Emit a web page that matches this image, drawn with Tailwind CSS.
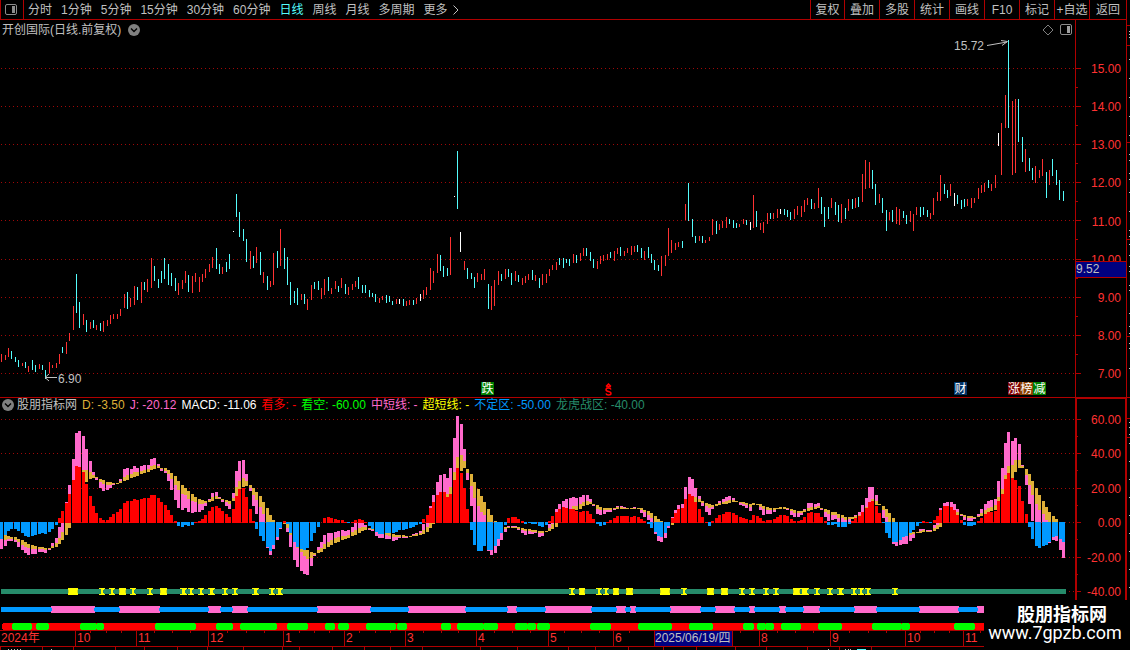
<!DOCTYPE html>
<html lang="zh-CN">
<head>
<meta charset="utf-8">
<title>开创国际 日线</title>
<script src="https://cdn.jsdelivr.net/npm/@tailwindcss/browser@4"></script>
</head>
<body class="bg-black">
<div class="relative flex h-screen overflow-hidden bg-black font-['Liberation_Sans','Noto_Sans_CJK_SC',sans-serif] text-xs text-[#c0c0c0]">
  <main class="flex min-w-0 flex-1 flex-col">

    <header class="flex h-5 shrink-0 items-stretch border-r border-b border-[#b00000] leading-[18px]">
      <button aria-label="侧栏" class="flex w-6 items-center justify-center border-x border-[#b00000] pr-0.5">
        <svg class="h-3 w-3" viewBox="0 0 12 12" fill="none" stroke="#8c8c8c"><rect x=".5" y=".5" width="11" height="10" rx="1.5"/><rect x="7" y="2" width="3" height="7" fill="#8c8c8c" stroke="none"/></svg>
      </button>
      <nav class="flex flex-1 gap-[9px] pl-1 whitespace-nowrap">
        <button>分时</button><button>1分钟</button><button>5分钟</button><button>15分钟</button><button>30分钟</button><button>60分钟</button><button class="text-[#54fcfc]">日线</button><button>周线</button><button>月线</button><button>多周期</button>
        <button class="flex items-center">更多<svg class="ml-1 h-3 w-2" viewBox="0 0 8 12" fill="none" stroke="#c0c0c0"><path d="M1.5 1.5L6 6L1.5 10.5"/></svg></button>
      </nav>
      <div class="flex whitespace-nowrap">
        <button class="w-[34px] border-l border-[#b00000]">复权</button>
        <button class="w-[35px] border-l border-[#b00000]">叠加</button>
        <button class="w-[35px] border-l border-[#b00000]">多股</button>
        <button class="w-[35px] border-l border-[#b00000]">统计</button>
        <button class="w-[35px] border-l border-[#b00000]">画线</button>
        <button class="w-[35px] border-l border-[#b00000]">F10</button>
        <button class="w-[35px] border-l border-[#b00000]">标记</button>
        <button class="w-[35px] border-l border-[#b00000]">+自选</button>
        <button class="w-[37px] border-l border-[#b00000]">返回</button>
      </div>
    </header>

    <section class="flex min-h-0 grow-[377] basis-0 border-r border-[#b00000]">
      <div class="relative min-w-0 flex-1">
        <svg id="price" class="absolute inset-0 size-full" viewBox="0 20 1075 377" preserveAspectRatio="none" shape-rendering="crispEdges"></svg>
        <div class="relative flex items-center justify-between pt-px pr-[3px] pl-0.5">
          <div class="flex items-center gap-[7px] leading-[18px]">
            <h1>开创国际(日线.前复权)</h1>
            <button aria-label="展开"><svg class="h-3 w-3" viewBox="0 0 12 12"><circle cx="6" cy="6" r="6" fill="#808080"/><path d="M3 4.5L6 7.5L9 4.5" fill="none" stroke="#000" stroke-width="1.4"/></svg></button>
          </div>
          <div class="flex items-center gap-1.5">
            <svg class="h-3 w-3" viewBox="0 0 12 12" fill="none" stroke="#808080"><path d="M6 1L11 6L6 11L1 6Z"/></svg>
            <svg class="h-3 w-3" viewBox="0 0 12 12" fill="none" stroke="#8c8c8c"><rect x=".5" y=".5" width="11" height="10" rx="1.5"/><rect x="7" y="2" width="3" height="7" fill="#a0a0a0" stroke="none"/></svg>
          </div>
        </div>
        <div class="absolute top-[18px] left-[954px] flex items-start leading-4">15.72<svg class="ml-[3px] mt-px h-3 w-[22px]" viewBox="0 0 22 12" fill="none" stroke="#c0c0c0"><path d="M0 6.5L20 3M14 1.5L20.500 2.500L15 6.500"/></svg></div>
        <div class="absolute top-[351px] left-[45px] flex items-start leading-4"><svg class="h-3 w-3" viewBox="0 0 12 12" fill="none" stroke="#c0c0c0"><path d="M12 6.500H0M4 3L0 6.500L4 10"/></svg><span class="ml-px">6.90</span></div>
        <span class="absolute bottom-[2px] left-[481px] size-[13px] bg-[#008000] text-center leading-[14px] text-white">跌</span>
        <svg class="absolute bottom-[1px] left-[605px] h-[13px] w-[7px]" viewBox="0 0 7 13" fill="none" stroke="#f00" stroke-width="1.500"><path d="M1 3.500L3.500 1L6 3.500M1 3.500H6M6 6.500Q5.500 5 3.500 5Q1 5 1 6.700Q1 8 3.500 8.500Q6 9 6 10.500Q6 12 3.500 12Q1.500 12 1 10.500"/></svg>
        <span class="absolute bottom-[2px] left-[954px] size-[13px] bg-[#003366] text-center leading-[14px] text-white">财</span>
        <div class="absolute bottom-[2px] left-[1008px] flex text-center leading-[14px] text-white">
          <span class="h-[13px] w-3 bg-[#800000]">涨</span><span class="size-[13px] bg-[#8a4000]">榜</span><span class="size-[13px] bg-[#008000]">减</span>
        </div>
      </div>
      <div class="relative flex w-[51px] border-l border-[#b00000] text-[#ff3232]">
        <svg id="priceTicks" class="absolute inset-0 size-full" viewBox="0 20 50 377" preserveAspectRatio="none" shape-rendering="crispEdges"></svg>
        <ol class="flex flex-1 flex-col justify-between pt-[41px] pr-[5px] pb-[15px] text-right leading-4">
          <li>15.00</li><li>14.00</li><li>13.00</li><li>12.00</li><li>11.00</li><li>10.00</li><li>9.00</li><li>8.00</li><li>7.00</li>
        </ol>
        <div class="absolute inset-x-0 top-[241px] h-[17px] border-y border-[#b00000] bg-[#000080] leading-[15px] text-[#c0c0c0]">9.52</div>
      </div>
    </section>

    <section class="flex min-h-0 grow-[233] basis-0">
      <div class="relative min-w-0 flex-1 border-t border-[#b00000]">
        <svg id="macd" class="absolute inset-0 size-full" viewBox="0 398 1075 232" preserveAspectRatio="none" shape-rendering="crispEdges"></svg>
        <div class="relative flex items-center gap-[5px] pl-0.5 leading-[14px] whitespace-nowrap">
          <button aria-label="指标" class="-mr-0.5"><svg class="h-3 w-3" viewBox="0 0 12 12"><circle cx="6" cy="6" r="6" fill="#808080"/><path d="M3 4.500L6 7.500L9 4.500" fill="none" stroke="#000" stroke-width="1.400"/></svg></button>
          <h2>股朋指标网</h2>
          <span class="text-[#dfb038]">D: -3.50</span>
          <span class="text-[#ff69cb]">J: -20.12</span>
          <span class="text-white">MACD: -11.06</span>
          <span class="text-[#ff0000]">看多: -</span>
          <span class="text-[#00ff00]">看空: -60.00</span>
          <span class="text-[#ff69cb]">中短线: -</span>
          <span class="text-[#ffff00]">超短线: -</span>
          <span class="text-[#0099ff]">不定区: -50.00</span>
          <span class="text-[#268b6a]">龙虎战区: -40.00</span>
        </div>
      </div>
      <div class="relative flex w-[52px] border-2 border-b-0 border-[#b00000] text-[#ff3232]">
        <svg id="macdTicks" class="absolute inset-0 size-full" viewBox="0 399 48 231" preserveAspectRatio="none" shape-rendering="crispEdges"></svg>
        <ol class="flex flex-1 flex-col justify-between pt-[13px] pr-1 pb-[30px] text-right leading-4">
          <li>60.00</li><li>40.00</li><li>20.00</li><li>0.00</li><li>-20.00</li><li>-40.00</li>
        </ol>
      </div>
    </section>

    <footer class="flex h-5 shrink-0 flex-col text-[#ff3232]">
      <div class="relative h-[17px] border-y border-[#b00000]">
        <svg id="timeTicks" class="absolute top-0 left-0 h-[2px] w-full" viewBox="0 0 1127 2" preserveAspectRatio="none" shape-rendering="crispEdges"></svg>
        <ol class="grid grid-cols-[75fr_61fr_72fr_75fr_61fr_61fr_71fr_72fr_65fr_41fr_78fr_27fr_71fr_75fr_58fr_164fr] leading-[15px] whitespace-nowrap">
          <li class="pl-px">2024年</li>
          <li class="border-l border-[#b00000] pl-px">10</li>
          <li class="border-l border-[#b00000] pl-px">11</li>
          <li class="border-l border-[#b00000] pl-px">12</li>
          <li class="border-l border-[#b00000] pl-px">1</li>
          <li class="border-l border-[#b00000] pl-px">2</li>
          <li class="border-l border-[#b00000] pl-px">3</li>
          <li class="border-l border-[#b00000] pl-px">4</li>
          <li class="border-l border-[#b00000] pl-px">5</li>
          <li class="border-l border-[#b00000] pl-px">6</li>
          <li class="border-l border-[#b00000] bg-[#000080] text-[#c0c0c0]">2025/06/19/四</li>
          <li class="border-l border-[#b00000]"></li>
          <li class="border-l border-[#b00000] pl-px">8</li>
          <li class="border-l border-[#b00000] pl-px">9</li>
          <li class="border-l border-[#b00000] pl-px">10</li>
          <li class="border-l border-[#b00000] pl-px">11</li>
        </ol>
      </div>
      <svg id="lowerTicks" class="h-[3px] w-full" viewBox="0 0 1127 3" preserveAspectRatio="none" shape-rendering="crispEdges"></svg>
    </footer>
  </main>

  <svg id="rail" class="h-full w-[3px] shrink-0" viewBox="0 0 3 650" preserveAspectRatio="none" shape-rendering="crispEdges"></svg>

  <a href="#" class="absolute right-0 bottom-0 flex h-[50px] w-[146px] flex-col bg-black pt-0.5 text-center text-white">
    <span class="pl-[10px] font-['Noto_Sans_CJK_SC',sans-serif] text-lg leading-[22px] font-bold">股朋指标网</span>
    <span class="pr-1 font-[Roboto,sans-serif] text-lg leading-[18px]">www.7gpzb.com</span>
  </a>
</div>

<script>
const el = id => document.getElementById(id);
const rect = (x, y, w, h, c) => `<rect x="${x}" y="${y}" width="${w}" height="${h}" fill="${c}"/>`;
const dots = (y, x2) => `<path d="M1 ${y + .5}H${x2}" stroke="#a00808" stroke-dasharray="1 3"/>`;
const AXIS = '#b00000';

// Daily high-low bars: origin, then colour + x,high,low in thirds of a unit.
const BAR = { r: '#ff3232', c: '#54fcfc', w: '#ffffff' };
const SERIES = [
[0,180,`r4,522,546 r16,525,540 r25,504,531 c34,513,537 c46,531,546 c55,540,561 r67,549,558 c76,546,564 r85,558,576 c97,540,570 c106,555,576 r118,552,567 c127,555,570 c136,570,597 r148,546,579 r157,555,564 r169,549,564 r178,522,552 c187,501,519 r199,486,522 r208,459,483 r220,378,450 c229,282,399 c238,366,444 r250,402,435 c259,420,456 r271,426,447 c280,420,444 r289,435,450 c301,429,453 r310,423,456 r322,420,438 r331,405,432 r340,402,417 r352,402,417 r361,387,408 r373,342,384 c382,336,387 r391,354,381 r403,318,375 c412,321,360 r424,306,369 c433,306,330 r442,297,336 r454,234,324 c463,258,303 c475,297,324 c484,273,309 c493,234,297 c505,252,315 c514,279,318 c526,294,333 r535,309,345 r547,300,327 r556,273,309 c565,285,336 r577,288,339 r586,279,306 r598,291,336 r607,282,306 r616,267,294 r628,252,276 r637,231,264 c649,204,267 c658,252,282 r667,261,282 c679,246,276 c688,222,267 w700,153,156 c709,42,111 c718,96,171 c730,147,183 c739,177,246 r751,213,267 c760,228,264 r769,201,249 c781,216,285 r790,276,309 c802,288,330 r811,303,321 r820,219,315 c832,213,264 r841,147,258 c853,204,267 c862,231,315`],
[280,140,`c31,426,495 c43,453,489 c52,444,495 r64,462,480 c73,462,492 r82,477,510 r94,435,480 c103,426,447 c115,423,450 r124,444,477 r133,417,465 c145,411,453 r154,444,462 r166,423,447 c175,438,456 r184,414,444 c196,432,462 r205,441,465 r217,432,450 r226,423,441 c235,411,447 c247,435,459 c256,435,459 c268,450,471 c277,459,471 c286,462,486 r298,474,489 r307,468,480 c319,465,489 c328,468,486 c337,483,495 r349,477,492 w358,477,492 c370,477,498 r379,483,498 r388,480,495 c400,480,495 r409,474,492 w421,462,483 r430,450,477 r439,441,465 r451,384,450 r460,393,429 r472,342,399 c481,345,393 c490,378,411 c502,384,408 r511,291,405 w523,168,171 c532,33,207 w541,276,336 r553,363,390 c562,384,417 c574,399,417 c583,411,444 r592,399,426 r604,402,420 r613,387,420 c625,432,507 r634,438,510 r643,420,498 r655,393,435 c664,402,423 r676,387,417 c685,387,411 c694,399,435 r706,393,423 c715,405,426 r727,414,435 r736,408,429 r745,402,420 c757,390,420 r766,405,423 c778,414,444 r787,402,435 r799,402,429 r808,387,408 r817,375,390 r829,366,390 c838,354,375`],
[540,150,`c70,324,354 c79,327,339 c88,327,348 r100,312,339 c109,315,339 r121,309,333 r130,294,318 c139,294,318 c151,306,333 c160,327,354 r172,333,357 r181,318,342 r190,315,333 r202,312,330 c211,306,324 r223,303,333 r232,294,312 c241,291,318 r253,303,318 r262,294,309 r274,288,315 r283,288,306 c292,285,306 c304,294,324 r313,303,330 c325,291,324 c334,312,339 c343,330,360 c355,345,363 r364,318,378 r376,315,348 r385,234,318 r394,270,309 r406,279,300 r415,276,291 c427,273,294 r436,162,210 c445,99,213 c457,207,261 c466,258,279 r478,258,273 c487,258,279 r496,270,279 r508,261,273 r517,207,255 c529,213,252 r538,222,240 r547,213,234 r559,201,234 c568,207,222 c580,210,234 c589,219,234 r598,222,231 r610,207,222 c619,210,225 w631,216,240 r640,135,234 c649,183,231 r661,219,240 r670,216,249 r682,189,222 c691,189,207 r700,189,207 r712,177,204 w721,177,192 c733,177,195 c742,180,201 c751,186,210 r763,177,207 r772,168,195 r784,168,201 r793,150,186 r802,144,165 c814,147,177 r823,159,177 r835,114,174 c844,141,192 c853,171,231 c865,171,207`],
[820,140,`r34,174,204 c46,186,225 c55,195,246 r64,192,249 c76,204,237 r85,177,213 c97,177,207 r106,174,204 c115,171,201 r127,102,186 r136,60,147 r148,66,144 c157,90,147 c166,132,195 r178,162,189 c187,174,219 c199,210,273 r208,216,240 c217,210,246 r229,201,252 r238,207,255 c250,213,234 c259,225,252 r271,213,246 r280,222,273 r289,201,225 c301,201,231 c310,201,225 c322,210,231 r331,219,237 r340,174,225 r352,156,183 r361,105,183 c373,132,162 c382,150,174 r391,132,168 w403,159,198 c412,165,192 c424,180,207 c433,177,201 r442,177,198 r454,174,204 r463,174,189 r475,144,177 r484,135,159 r493,129,156 c505,120,144 r514,132,153 r526,105,144`],
[790,0,`w625,399,438 r634,369,525 r646,285,384 c655,120,384 r667,303,525 r676,297,519 c685,297,426 c697,411,486 r706,447,516 c718,474,513 c727,504,540 r736,498,549 r748,510,534 r757,477,528 c769,516,594 r778,510,555 c787,477,528 c799,510,555 c808,540,600 c820,573,603`]];

const PRICE_ROWS = [68,106,144,182,220,259,297,335,373];
let out = PRICE_ROWS.map(y => dots(y, 1075)).join('');
for (const [ox, oy, text] of SERIES)
  for (const b of text.split(' ')) {
    const [x, hi, lo] = b.slice(1).split(',').map(Number);
    const top = Math.round(oy + hi / 3), bottom = Math.round(oy + lo / 3);
    out += rect(ox + Math.floor(x / 3), top, 1, bottom - top, BAR[b[0]]);
  }
el('price').innerHTML = out;

out = '';
PRICE_ROWS.forEach((y, i) => {
  out += rect(0, y, 5, 1, AXIS);
  if (i < 8) out += rect(0, y + 19, 2, 1, AXIS);
});
el('priceTicks').innerHTML = out;

// Oscillator, one entry per day: MACD, J, K, D heights in thirds of a unit below y=395.
const OSC = `432,462,432,432 420,453,435,420 408,438,432,423 402,438,432,426 402,441,435,426 408,456,441,432 414,465,450,435 423,474,455,441 426,480,459,447 423,477,462,450 420,477,462,453 417,471,462,456 414,471,462,456 417,474,465,459 411,465,462,459 402,444,453,459 390,429,444,456 369,396,429,447 348,382,411,435 324,321,382,420
297,270,340,399 255,192,300,360 213,114,250,320 216,108,230,280 231,123,225,255 267,162,225,261 303,198,231,252 333,231,240,249 354,255,249,246 369,279,261,252 375,288,267,255 375,285,270,261 366,279,270,261 357,270,267,264 351,264,264,267 342,252,258,264 324,222,246,258 318,219,240,255 318,222,237,249 312,213,231,246
315,219,231,243 312,213,228,237 309,210,225,234 309,210,222,231 300,192,213,225 300,189,210,222 309,207,213,219 321,228,222,219 330,234,228,219 345,258,237,225 360,285,252,234 378,315,270,243 392,339,285,258 396,345,297,270 390,339,300,279 393,351,312,288 390,354,318,297 381,351,321,306 378,351,327,312 372,345,327,315
360,333,324,318 348,312,315,321 336,294,306,318 333,291,303,312 339,306,309,312 348,321,315,312 357,333,321,315 366,342,327,318 342,294,309,318 303,228,276,303 282,198,258,290 279,195,249,276 306,237,258,273 342,288,279,270 378,333,300,279 402,357,315,291 423,381,336,303 438,400,357,321 456,459,385,339 468,480,400,360
450,462,400,375 426,435,400,385 399,402,395,390 378,384,384,387 387,411,399,386 414,456,420,400 441,495,441,420 456,516,460,430 462,528,471,440 465,537,483,445 459,540,492,465 438,513,489,471 414,483,480,474 396,456,465,474 382,441,459,471 369,420,447,462 366,414,441,456 369,414,435,450 372,411,429,444 375,408,426,441
375,405,423,435 381,408,423,432 384,405,420,429 381,396,411,423 375,384,405,420 372,384,400,414 375,384,396,408 381,390,396,405 394,405,402,400 402,408,405,402 411,423,411,405 417,429,417,410 417,429,417,412 414,432,420,414 414,432,423,414 414,438,426,417 411,435,426,420 405,429,426,420 405,429,426,420 402,429,426,423
399,423,423,426 396,417,420,423 390,414,417,423 387,408,414,420 372,387,405,417 360,384,396,411 339,333,382,399 321,300,360,387 300,261,330,360 291,240,310,340 291,237,300,330 306,249,297,320 297,219,276,305 255,129,231,270 219,63,186,240 234,87,180,228 279,162,198,219 342,255,234,222 405,333,273,237 450,382,309,261
468,420,333,282 468,460,351,303 453,450,360,321 465,468,382,342 465,480,400,360 453,474,400,378 432,453,415,395 414,435,414,400 390,411,402,396 369,393,396,399 366,393,396,399 366,393,396,399 372,405,402,396 378,414,405,399 387,420,408,402 384,417,408,402 387,417,411,405 387,414,411,405 393,426,414,408 396,423,414,408
390,408,408,411 378,387,400,408 363,363,387,402 351,342,375,396 342,327,360,380 336,318,350,370 339,312,345,360 342,309,342,355 342,306,333,345 348,309,333,345 351,306,327,342 348,300,321,333 348,300,318,330 357,312,321,327 372,333,330,327 387,357,342,330 393,360,345,336 390,357,345,339 381,351,345,339 375,351,345,339
369,345,342,339 363,333,336,342 363,333,336,342 363,336,339,342 363,339,339,342 366,339,339,342 363,336,339,342 366,339,339,342 372,354,345,339 378,366,351,345 387,375,360,348 399,381,369,354 411,417,381,363 423,438,400,372 426,441,410,378 414,429,405,385 393,399,390,385 369,366,382,390 354,345,370,380 342,330,360,370
339,327,355,365 312,276,330,350 297,246,310,330 303,252,305,320 321,279,306,321 342,303,312,321 366,333,324,318 381,351,333,324 393,360,339,327 378,342,336,330 369,327,327,333 360,318,324,330 357,312,321,327 351,306,318,327 351,303,315,324 354,309,315,321 360,318,318,321 366,330,324,321 369,333,327,321 372,339,330,324
375,348,336,327 360,324,324,330 363,327,327,330 369,345,336,327 378,360,342,333 375,357,345,336 375,357,345,339 372,351,345,339 366,339,339,342 360,336,336,342 360,336,336,342 363,345,342,339 372,360,348,342 378,366,354,345 378,366,354,348 375,360,354,348 366,342,345,351 354,324,339,348 351,324,336,345 354,327,336,342
354,324,333,339 366,345,342,339 378,366,351,342 390,378,357,345 390,375,360,351 387,372,360,351 396,381,369,357 396,381,369,360 396,381,375,366 387,381,372,366 378,366,366,372 369,360,363,369 363,351,360,366 351,330,350,360 339,309,336,345 321,276,325,335 318,276,312,325 333,300,318,330 354,327,327,330 384,369,345,333
414,395,366,342 429,420,382,354 441,447,400,369 441,453,420,385 435,450,425,395 426,447,425,405 423,447,423,410 414,438,420,412 405,429,417,411 393,411,411,414 384,402,408,414 378,402,405,411 381,405,408,411 384,405,408,411 375,390,399,408 363,384,390,402 345,339,382,396 333,324,360,375 333,321,350,365 336,321,345,360
345,327,345,355 360,342,351,360 375,363,360,357 390,375,366,360 393,378,369,363 393,378,369,363 390,372,369,366 378,357,363,366 369,342,354,363 357,327,345,357 351,318,339,351 351,315,336,348 348,312,330,345 318,258,306,325 297,219,282,305 252,144,240,270 234,111,213,245 249,138,210,249 255,129,195,231 273,147,195,219
318,210,213,219 357,270,240,222 396,327,270,237 432,378,300,258 453,420,327,279 459,430,345,300 453,430,357,318 450,440,375,336 441,444,385,351 426,435,395,363 423,438,400,372 432,465,415,385 441,489,420,400`.split(/\s+/);

const OSC_ROWS = [419,453,488,522,557,591];
const level = v => Math.round(395 + v / 3);
const span = (x, a, b, c) => {
  const lo = Math.min(level(a), level(b)), hi = Math.max(level(a), level(b));
  return hi > lo ? rect(x, lo, 3, hi - lo, c) : '';
};
out = OSC_ROWS.map(y => dots(y, 1075)).join('');
OSC.forEach((t, i) => {
  const [m, j, k, d] = t.split(',').map(Number);
  const x = Math.round(1.2 + 3.403 * i) - 1;
  out += span(x, j, k, '#ff69cb') + span(x, k, d, '#dfb038');
  out += m < 382 ? span(x, m, 384, '#ff0000') : span(x, 381, m, '#0099ff');
});

// Status strips under the oscillator.
const pairs = s => s.split(' ').map(p => p.split('-').map(Number));
out += rect(1, 589, 1065, 5, '#268b6a');
for (const [a, b] of pairs('68-78 119-126 160-167 579-585 613-619 626-633 660-670 707-714 721-728 793-800'))
  out += rect(a, 588, b - a, 7, '#ffff00') + rect(a, 590, 1, 3, '#c8d020') + rect(b - 1, 590, 1, 3, '#c8d020');
for (const [a, b] of pairs('99-105 109-115 130-136 147-153 180-187 188-194 198-204 208-215 222-228 232-238 252-259 269-275 276-283 569-575 596-602 603-609 681-687 739-745 749-755 763-769 773-779 800-809 814-820 827-833 837-844 851-857 858-864 865-871 892-898'))
  out += rect(a, 588, b - a, 1, '#ffff00') + rect(a, 594, b - a, 1, '#ffff00') + rect(a + 2, 589, b - a - 4, 5, '#ffff00') + rect(b - 2, 589, 1, 1, '#ffff00') + rect(b - 2, 593, 1, 1, '#ffff00');
out += rect(1, 607, 1065, 5, '#0099ff');
for (const [a, b] of pairs('51-95 119-160 208-221 232-248 317-371 408-466 507-517 545-592 616-626 630-636 670-701 715-735 749-755 779-786 803-820 854-877 919-959 977-990'))
  out += rect(a, 606, b - a, 7, '#ff69cb') + rect(a, 608, 1, 3, '#0099ff') + rect(b - 1, 608, 1, 3, '#0099ff');
out += '<rect x="2" y="623" width="1064" height="7" rx="3" fill="#ff0000"/>';
for (const [a, b] of pairs('12-32 36-49 80-97 96-104 155-196 216-233 240-277 287-308 325-335 338-349 366-396 397-407 441-451 457-484 483-498 515-528 527-536 537-550 590-611 638-672 689-713 743-754 757-766 765-774 781-801 818-842 872-902 901-910 954-975'))
  out += `<rect x="${a}" y="623" width="${b - a}" height="7" rx="3" fill="#00ff00"/>`;
el('macd').innerHTML = out;

out = '';
OSC_ROWS.forEach((y, i) => {
  out += rect(0, y, 4, 1, AXIS);
  if (i < 5) out += rect(0, y + 17, 1, 1, AXIS);
});
el('macdTicks').innerHTML = out;

el('timeTicks').innerHTML = [90,106,121,154,172,190,227,246,264,299,314,329,359,375,390,423,441,458,494,512,530,564,581,599,629,740,777,795,813,849,868,886,920,934,949,980].map(x => rect(x, 0, 1, 2, AXIS)).join('');
el('lowerTicks').innerHTML = [0,42,73,115,144,177,207,243,282,299,332,364,390,422,480,517,568,595,628,663,696,735,766,807,839,871].map(x => rect(x, 0, 1, 3, AXIS)).join('')
  + [8,11,14,17,20,51,828,845,848,850].map(x => rect(x, 2, 1, 1, '#c0c0c0')).join('') + rect(857, 2, 9, 1, '#54fcfc');

el('rail').innerHTML = [25,45,142,239,336,397,418,437].map(y => rect(0, y, 3, 1, AXIS)).join('')
  + [31,34,37,59,78,97,116,135,154,160,173,179,192,211,230,236,244,255,266,271,285,290,313,326,333,343,348,368,422,427,434,443,461,479,497,515,533,551,569,587].map(y => rect(2, y, 1, 1, '#c0c0c0')).join('');
</script>
</body>
</html>
